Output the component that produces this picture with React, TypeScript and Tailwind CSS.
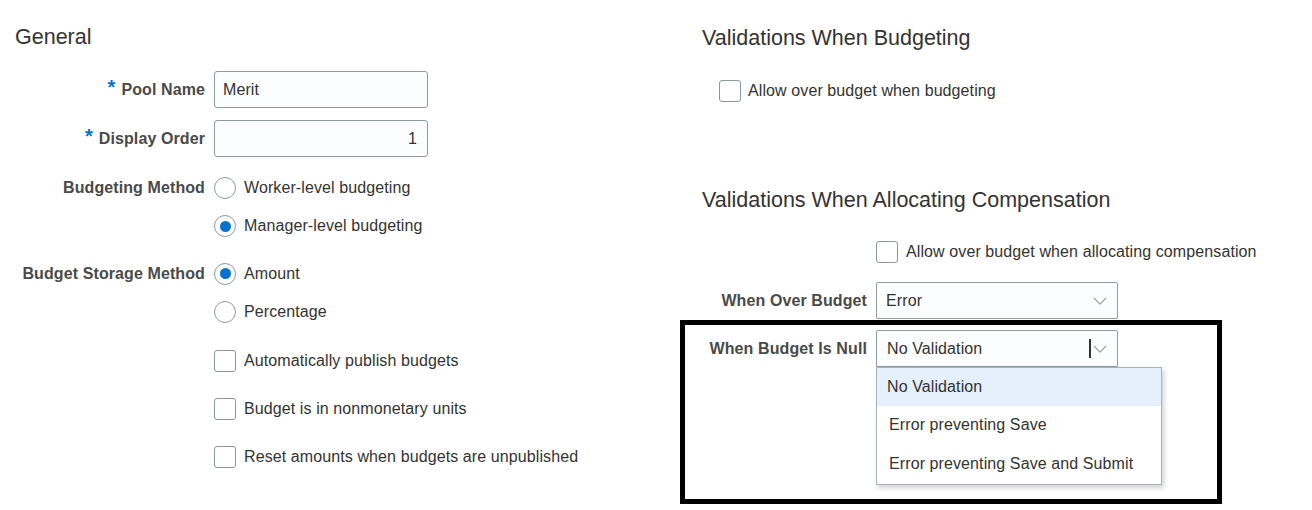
import React from "react";

const labelCls = "text-[16px] font-bold text-[#4a4a4a]";

function Radio({ checked }: { checked?: boolean }) {
  return (
    <span className="flex h-[22px] w-[22px] shrink-0 items-center justify-center rounded-full border border-[#8f9aa3] bg-white">
      {checked ? <span className="h-[11px] w-[11px] rounded-full bg-[#0572ce]" /> : null}
    </span>
  );
}

function Checkbox() {
  return <span className="h-[22px] w-[22px] shrink-0 rounded-[3px] border border-[#8d979f] bg-white" />;
}

function Chevron() {
  return (
    <svg width="14" height="8" viewBox="0 0 14 8" fill="none" className="shrink-0">
      <path d="M1 1l6 6 6-6" stroke="#a3a7ab" strokeWidth="1.3" />
    </svg>
  );
}

function Required() {
  return <span className="relative -top-[3px] mr-[6px] text-[20px] leading-none text-[#0572ce]">*</span>;
}

export default function App() {
  return (
    <div className="flex h-[510px] w-[1312px] overflow-hidden bg-white font-['Liberation_Sans',Arial,sans-serif] text-[16px] tracking-[0.1px] text-[#333]">
      {/* left column */}
      <div className="w-[680px] shrink-0">
        <h2 className="pl-[15px] pt-[25px] text-[21.5px] leading-[24px] tracking-normal text-[#333]">General</h2>

        <div className="mt-[22px] flex items-center gap-[9px]">
          <div className={`flex w-[205px] items-center justify-end ${labelCls}`}>
            <Required />
            Pool Name
          </div>
          <div className="flex h-[37px] w-[214px] items-center rounded-[3px] border border-[#8e9aa4] bg-[#fcfdfe] px-[8px]">
            Merit
          </div>
        </div>

        <div className="mt-[12px] flex items-center gap-[9px]">
          <div className={`flex w-[205px] items-center justify-end ${labelCls}`}>
            <Required />
            Display Order
          </div>
          <div className="flex h-[37px] w-[214px] items-center justify-end rounded-[3px] border border-[#8e9aa4] bg-[#fcfdfe] px-[10px]">
            1
          </div>
        </div>

        <div className="mt-[11px] flex gap-[9px]">
          <div className={`flex h-[39px] w-[205px] items-center justify-end ${labelCls}`}>Budgeting Method</div>
          <div className="flex flex-col">
            <label className="flex h-[39px] items-center gap-[8px]">
              <Radio />
              Worker-level budgeting
            </label>
            <label className="flex h-[38px] items-center gap-[8px]">
              <Radio checked />
              Manager-level budgeting
            </label>
          </div>
        </div>

        <div className="mt-[9px] flex gap-[9px]">
          <div className={`flex h-[39px] w-[205px] items-center justify-end ${labelCls}`}>Budget Storage Method</div>
          <div className="flex flex-col">
            <label className="flex h-[39px] items-center gap-[8px]">
              <Radio checked />
              Amount
            </label>
            <label className="flex h-[38px] items-center gap-[8px]">
              <Radio />
              Percentage
            </label>
          </div>
        </div>

        <div className="mt-[6px] flex flex-col pl-[214px]">
          <label className="flex h-[48px] items-center gap-[8px]">
            <Checkbox />
            Automatically publish budgets
          </label>
          <label className="flex h-[48px] items-center gap-[8px]">
            <Checkbox />
            Budget is in nonmonetary units
          </label>
          <label className="flex h-[48px] items-center gap-[8px]">
            <Checkbox />
            Reset amounts when budgets are unpublished
          </label>
        </div>
      </div>

      {/* right column */}
      <div className="flex-1">
        <h2 className="pl-[22px] pt-[26px] text-[21.5px] leading-[24px] tracking-normal text-[#333]">
          Validations When Budgeting
        </h2>
        <label className="mt-[26px] flex h-[30px] items-center gap-[7px] pl-[39px]">
          <Checkbox />
          Allow over budget when budgeting
        </label>

        <h2 className="mt-[82px] pl-[22px] text-[21.5px] leading-[24px] tracking-normal text-[#333]">
          Validations When Allocating Compensation
        </h2>
        <label className="mt-[25px] flex h-[30px] items-center gap-[8px] pl-[196px]">
          <Checkbox />
          Allow over budget when allocating compensation
        </label>

        <div className="mt-[15px] flex items-center gap-[9px]">
          <div className={`w-[187px] text-right ${labelCls}`}>When Over Budget</div>
          <div className="flex h-[37px] w-[242px] items-center justify-between rounded-[2px] border border-[#8e9aa4] bg-[#fcfdfe] pl-[9px] pr-[10px]">
            <span>Error</span>
            <Chevron />
          </div>
        </div>

        <div className="mt-[1px] h-[184px] w-[542px] border-[5px] border-black pt-[5px]">
          <div className="flex items-center gap-[9px]">
            <div className={`w-[182px] text-right ${labelCls}`}>When Budget Is Null</div>
            <div className="relative">
              <div className="flex h-[37px] w-[242px] items-center justify-between rounded-t-[2px] border border-[#8e9aa4] bg-[#fcfdfe] pl-[10px] pr-[10px]">
                <span>No Validation</span>
                <span className="flex items-center gap-[2px]">
                  <span className="h-[19px] w-[2px] bg-[#333]" />
                  <Chevron />
                </span>
              </div>
              <ul className="absolute left-0 top-full z-10 w-[286px] border border-[#a9b3bb] bg-white text-[#333] shadow-[2px_3px_5px_rgba(0,0,0,0.18)]">
                <li className="flex h-[38px] items-center bg-[#e4f0fc] pl-[10px]">No Validation</li>
                <li className="flex h-[38px] items-center pl-[12px]">Error preventing Save</li>
                <li className="flex h-[40px] items-center pl-[12px]">Error preventing Save and Submit</li>
              </ul>
            </div>
          </div>
        </div>
      </div>
    </div>
  );
}
